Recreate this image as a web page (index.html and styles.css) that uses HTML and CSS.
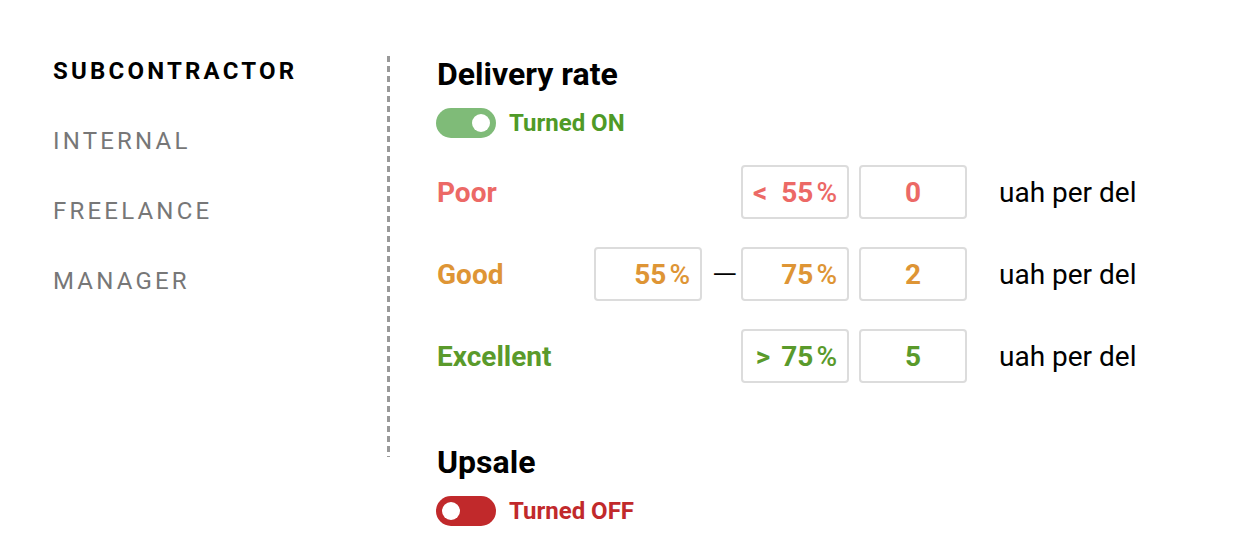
FILE: index.html
```html
<!DOCTYPE html>
<html lang="en">
<head>
<meta charset="utf-8">
<title>Bonus settings</title>
<link rel="stylesheet" href="styles.css">
</head>
<body>
<div class="page">
  <nav class="sidebar">
    <a class="nav-item active">SUBCONTRACTOR</a>
    <a class="nav-item">INTERNAL</a>
    <a class="nav-item">FREELANCE</a>
    <a class="nav-item">MANAGER</a>
  </nav>
  <div class="divider"></div>
  <main class="content">
    <section class="block">
      <h2 class="block-title">Delivery rate</h2>
      <div class="switch-row">
        <span class="switch on"><span class="knob"></span></span>
        <span class="switch-label on">Turned ON</span>
      </div>
      <div class="rates">
        <div class="rate-label poor">Poor</div>
        <div class="field pct poor col-to">&lt;&nbsp; 55<span class="thin">%</span></div>
        <div class="field val poor">0</div>
        <div class="unit">uah per del</div>

        <div class="rate-label good">Good</div>
        <div class="field pct good col-from">55<span class="thin">%</span></div>
        <div class="dash">—</div>
        <div class="field pct good col-to">75<span class="thin">%</span></div>
        <div class="field val good">2</div>
        <div class="unit">uah per del</div>

        <div class="rate-label excellent">Excellent</div>
        <div class="field pct excellent col-to">&gt;<span class="gap"> </span>75<span class="thin">%</span></div>
        <div class="field val excellent">5</div>
        <div class="unit">uah per del</div>
      </div>
    </section>
    <section class="block second">
      <h2 class="block-title">Upsale</h2>
      <div class="switch-row">
        <span class="switch off"><span class="knob"></span></span>
        <span class="switch-label off">Turned OFF</span>
      </div>
    </section>
  </main>
</div>
</body>
</html>
```
FILE: styles.css
```css
* { box-sizing: border-box; }
html, body { margin: 0; padding: 0; background: #fff; }
body {
  font-family: Roboto, "Noto Sans", "Liberation Sans", sans-serif;
  color: #000;
  overflow: hidden;
}
.page {
  display: flex;
  align-items: flex-start;
  padding-left: 53px;
}
.sidebar {
  width: 334px;
  padding-top: 36px;
  display: flex;
  flex-direction: column;
}
.nav-item {
  height: 70px;
  line-height: 70px;
  font-size: 24px;
  letter-spacing: 3.2px;
  color: #777;
  font-weight: 400;
  white-space: nowrap;
}
.nav-item.active {
  color: #000;
  font-weight: 700;
}
.divider {
  width: 3px;
  height: 401px;
  margin-top: 56px;
  background: repeating-linear-gradient(to bottom, #999 0 6px, transparent 6px 10px);
}
.content {
  margin-left: 47px;
  padding-top: 57px;
  flex: 1;
}
.block-title {
  margin: 0;
  font-size: 32px;
  line-height: 34px;
  font-weight: 700;
}
.switch-row {
  display: flex;
  align-items: center;
  gap: 13px;
  margin-top: 17px;
  height: 30px;
  margin-left: -1px;
}
.switch {
  width: 60px;
  height: 30px;
  border-radius: 15px;
  display: flex;
  align-items: center;
  padding: 0 6px;
}
.switch .knob {
  width: 18px;
  height: 18px;
  border-radius: 50%;
  background: #fff;
}
.switch.on { background: #7fbb78; justify-content: flex-end; }
.switch.off { background: #c1292b; justify-content: flex-start; }
.switch-label {
  font-size: 24px;
  font-weight: 700;
}
.switch-label.on { color: #4f9a27; }
.switch-label.off { color: #c1292b; }

.rates {
  margin-top: 27px;
  display: grid;
  grid-template-columns: 147px 108px 19px 108px 108px auto;
  grid-auto-rows: 54px;
  column-gap: 10px;
  row-gap: 28px;
  align-items: center;
}
.rate-label {
  grid-column: 1;
  font-size: 28px;
  font-weight: 700;
}
.poor { color: #ec6966; }
.good { color: #de9535; }
.excellent { color: #5a9a2b; }
.field {
  height: 54px;
  border: 2px solid #dcdcdc;
  border-radius: 4px;
  display: flex;
  align-items: center;
  font-size: 28px;
  font-weight: 700;
  white-space: pre;
}
.field.pct { justify-content: flex-end; padding-right: 10px; }
.field.val { justify-content: center; grid-column: 5; }
.col-from { grid-column: 2; }
.col-to { grid-column: 4; }
.gap { display: inline-block; width: 11px; }
.thin { margin-left: 3px; font-weight: 500; }
.dash {
  grid-column: 3;
  text-align: center;
  font-size: 33px;
  font-weight: 300;
}
.unit {
  grid-column: 6;
  padding-left: 22px;
  font-size: 28px;
  font-weight: 400;
  white-space: nowrap;
}
.block.second { margin-top: 62px; }
.block.second .switch-row { margin-top: 17px; }
```
